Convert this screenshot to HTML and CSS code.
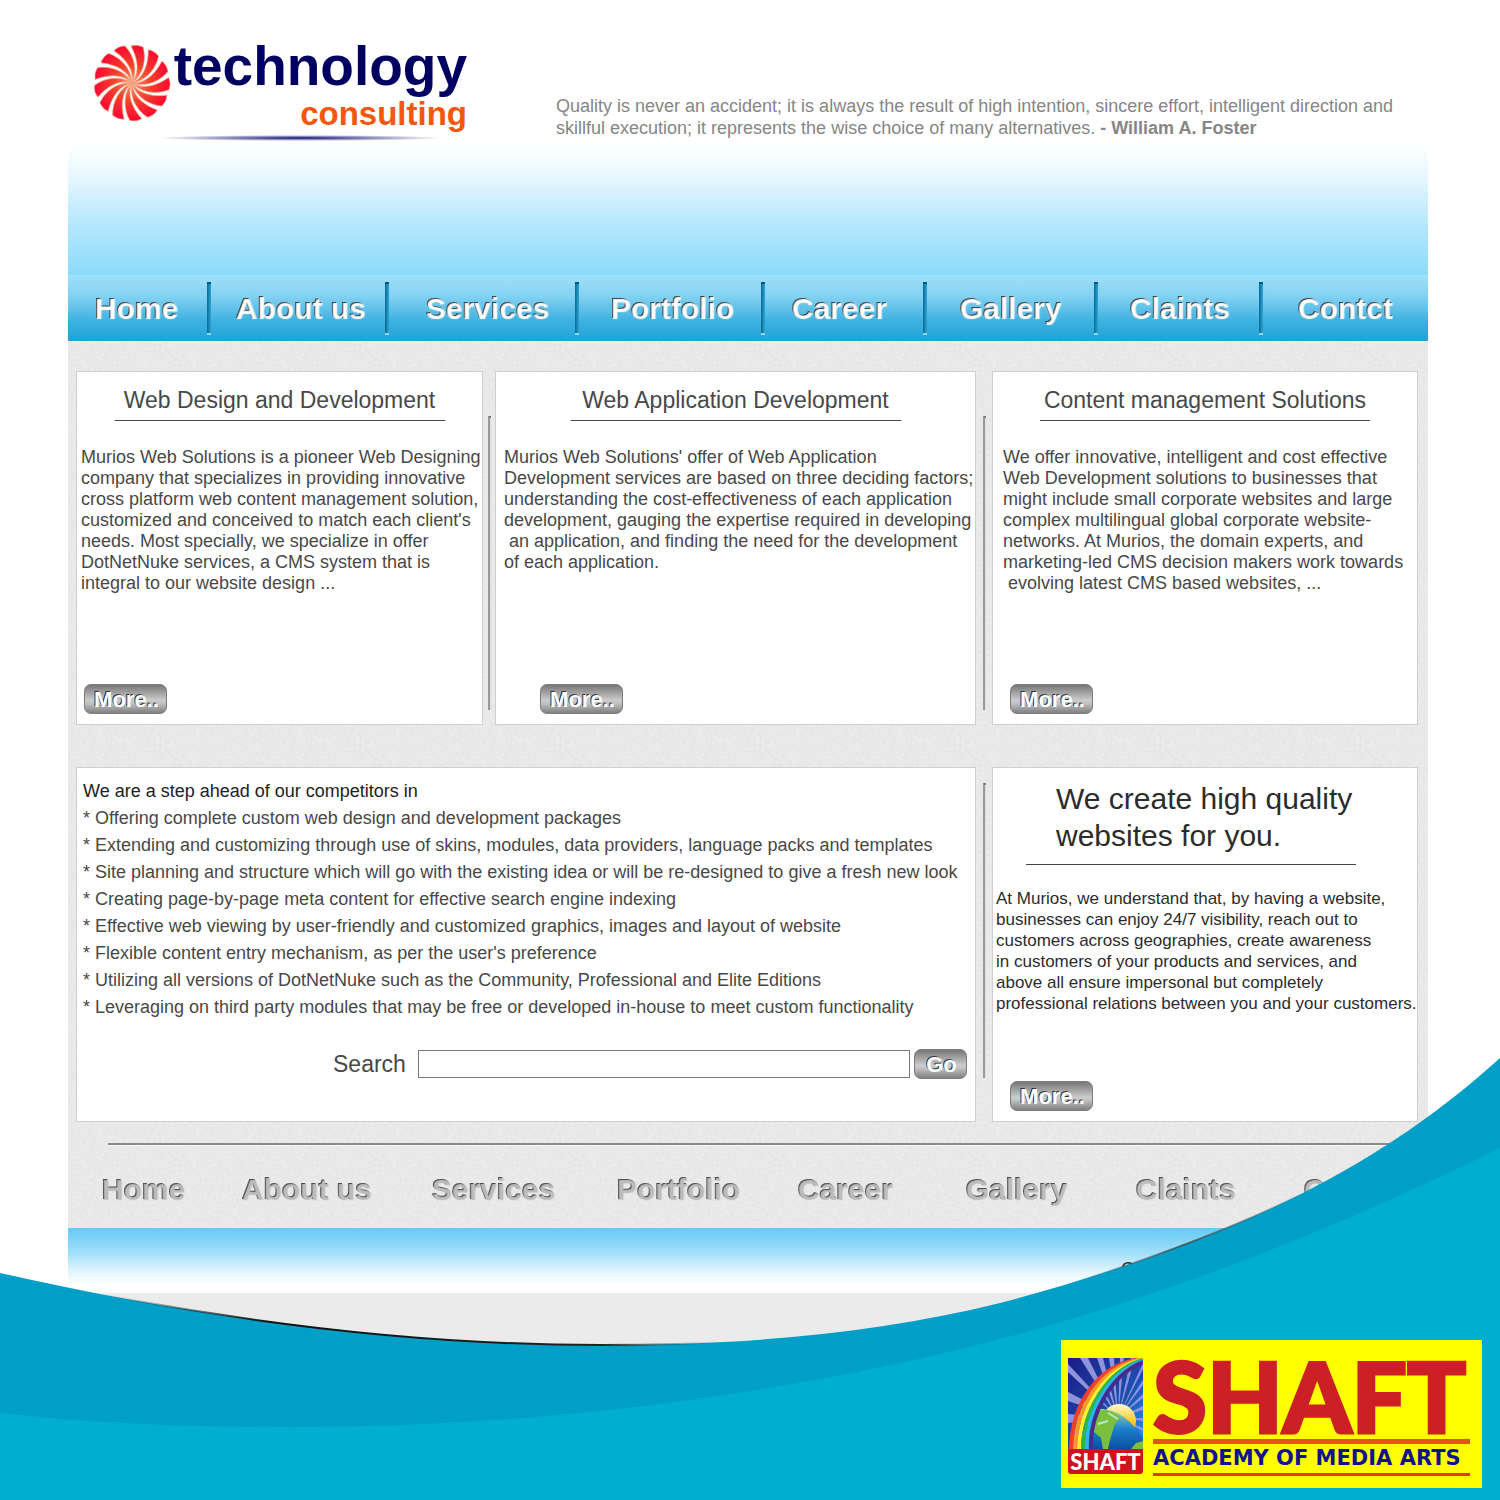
FILE: index.html
```html
<!DOCTYPE html>
<html lang="en">
<head>
<meta charset="utf-8">
<meta name="viewport" content="width=device-width, initial-scale=1">
<title>Technology Consulting</title>
<link rel="stylesheet" href="styles.css">
</head>
<body>
<div class="page">
  <header class="header">
    <div class="logo">
      <svg class="logo-mark" viewBox="-39 -39 78 78" aria-hidden="true">
        <defs>
          <radialGradient id="petal" gradientUnits="userSpaceOnUse" cx="0" cy="0" r="39">
            <stop offset="0" stop-color="#f9a080"/>
            <stop offset=".45" stop-color="#f4432c"/>
            <stop offset="1" stop-color="#fb0433"/>
          </radialGradient>
          <path id="blade" d="M0 0C6-8 8-20-1-37Q5-39 11-36C15-22 10-7 0 0Z" fill="url(#petal)" stroke="#f0a078" stroke-width=".6"/>
        </defs>
        <g>
          <use href="#blade"/><use href="#blade" transform="rotate(27.7)"/><use href="#blade" transform="rotate(55.4)"/><use href="#blade" transform="rotate(83.1)"/><use href="#blade" transform="rotate(110.8)"/><use href="#blade" transform="rotate(138.5)"/><use href="#blade" transform="rotate(166.2)"/><use href="#blade" transform="rotate(193.8)"/><use href="#blade" transform="rotate(221.5)"/><use href="#blade" transform="rotate(249.2)"/><use href="#blade" transform="rotate(276.9)"/><use href="#blade" transform="rotate(304.6)"/><use href="#blade" transform="rotate(332.3)"/>
        </g>
      </svg>
      <div class="logo-text">
        <span class="logo-name">technology</span>
        <span class="logo-sub">consulting</span>
      </div>
      <div class="logo-line"></div>
    </div>
    <p class="quote">Quality is never an accident; it is always the result of high intention, sincere effort, intelligent direction and<br>skillful execution; it represents the wise choice of many alternatives. <b>- William A. Foster</b></p>
  </header>

  <nav class="nav" aria-label="Main">
    <a class="nav-link" href="#">Home</a><span class="nav-sep"></span>
    <a class="nav-link" href="#">About us</a><span class="nav-sep"></span>
    <a class="nav-link" href="#">Services</a><span class="nav-sep"></span>
    <a class="nav-link" href="#">Portfolio</a><span class="nav-sep"></span>
    <a class="nav-link" href="#">Career</a><span class="nav-sep"></span>
    <a class="nav-link" href="#">Gallery</a><span class="nav-sep"></span>
    <a class="nav-link" href="#">Claints</a><span class="nav-sep"></span>
    <a class="nav-link" href="#">Contct</a>
  </nav>

  <main class="content">
    <div class="row row-three">
      <section class="card card-left">
        <h2 class="card-title">Web Design and Development</h2>
        <p class="card-text">Murios Web Solutions is a pioneer Web Designing<br>company that specializes in providing innovative<br>cross platform web content management solution,<br>customized and conceived to match each client's<br>needs. Most specially, we specialize in offer<br>DotNetNuke services, a CMS system that is<br>integral to our website design ...</p>
        <button class="button" type="button"><span class="button-label">More..</span></button>
      </section>
      <div class="divider"></div>
      <section class="card card-middle">
        <h2 class="card-title">Web Application Development</h2>
        <p class="card-text">Murios Web Solutions' offer of Web Application<br>Development services are based on three deciding factors;<br>understanding the cost-effectiveness of each application<br>development, gauging the expertise required in developing<br>&nbsp;an application, and finding the need for the development<br>of each application.</p>
        <button class="button" type="button"><span class="button-label">More..</span></button>
      </section>
      <div class="divider"></div>
      <section class="card card-right">
        <h2 class="card-title">Content management Solutions</h2>
        <p class="card-text">We offer innovative, intelligent and cost effective<br>Web Development solutions to businesses that<br>might include small corporate websites and large<br>complex multilingual global corporate website-<br>networks. At Murios, the domain experts, and<br>marketing-led CMS decision makers work towards<br>&nbsp;evolving latest CMS based websites, ...</p>
        <button class="button" type="button"><span class="button-label">More..</span></button>
      </section>
    </div>

    <div class="row row-two">
      <section class="card card-wide">
        <h2 class="list-title">We are a step ahead of our competitors in</h2>
        <ul class="list">
          <li>* Offering complete custom web design and development packages</li>
          <li>* Extending and customizing through use of skins, modules, data providers, language packs and templates</li>
          <li>* Site planning and structure which will go with the existing idea or will be re-designed to give a fresh new look</li>
          <li>* Creating page-by-page meta content for effective search engine indexing</li>
          <li>* Effective web viewing by user-friendly and customized graphics, images and layout of website</li>
          <li>* Flexible content entry mechanism, as per the user's preference</li>
          <li>* Utilizing all versions of DotNetNuke such as the Community, Professional and Elite Editions</li>
          <li>* Leveraging on third party modules that may be free or developed in-house to meet custom functionality</li>
        </ul>
        <form class="search">
          <label class="search-label" for="search">Search</label>
          <input class="search-input" id="search" type="text">
          <button class="button button-go" type="button"><span class="button-label">Go</span></button>
        </form>
      </section>
      <div class="divider"></div>
      <section class="card card-quality">
        <h2 class="quality-title">We create high quality<br>websites for you.</h2>
        <p class="card-text">At Murios, we understand that, by having a website,<br>businesses can enjoy 24/7 visibility, reach out to<br>customers across geographies, create awareness<br>in customers of your products and services, and<br>above all ensure impersonal but completely<br>professional relations between you and your customers.</p>
        <button class="button" type="button"><span class="button-label">More..</span></button>
      </section>
    </div>

    <hr class="rule">
    <nav class="foot-nav" aria-label="Footer">
      <a class="foot-link" href="#">Home</a>
      <a class="foot-link" href="#">About us</a>
      <a class="foot-link" href="#">Services</a>
      <a class="foot-link" href="#">Portfolio</a>
      <a class="foot-link" href="#">Career</a>
      <a class="foot-link" href="#">Gallery</a>
      <a class="foot-link" href="#">Claints</a>
      <a class="foot-link" href="#">C</a>
    </nav>
  </main>
  <footer class="footer"><span class="footer-text">C</span></footer>
  <div class="base"></div>

  <svg class="wave" viewBox="0 1050 1500 450" preserveAspectRatio="none" aria-hidden="true">
    <defs>
      <linearGradient id="edge" gradientUnits="userSpaceOnUse" x1="0" y1="0" x2="1500" y2="0">
        <stop offset=".07" stop-color="#111" stop-opacity="0"/>
        <stop offset=".18" stop-color="#111"/>
        <stop offset=".4" stop-color="#222"/>
        <stop offset=".48" stop-color="#444" stop-opacity="0"/>
        <stop offset=".72" stop-color="#444" stop-opacity="0"/>
        <stop offset=".79" stop-color="#444" stop-opacity=".8"/>
        <stop offset=".87" stop-color="#444" stop-opacity="0"/>
      </linearGradient>
    </defs>
    <path fill="#009fc7" d="M0 1273C200 1318 400 1345 600 1345C740 1345 870 1335 1000 1303C1105 1275 1210 1240 1303 1193C1380 1154 1445 1108 1500 1058V1500H0Z"/>
    <path fill="none" stroke="url(#edge)" stroke-width="2" d="M0 1273C200 1318 400 1345 600 1345C740 1345 870 1335 1000 1303C1105 1275 1210 1240 1303 1193"/>
    <path fill="#00aecf" d="M0 1413C95 1424 190 1427 290 1427C450 1427 600 1415 750 1391C850 1375 945 1355 1040 1328C1200 1283 1350 1222 1500 1148V1500H0Z"/>
  </svg>

  <aside class="badge">
    <div class="emblem">
      <svg class="emblem-art" viewBox="0 0 75 91" aria-hidden="true">
        <defs>
          <linearGradient id="sky" x1="0" y1="0" x2="1" y2="1"><stop offset="0" stop-color="#1b1c86"/><stop offset=".6" stop-color="#1d4fae"/><stop offset="1" stop-color="#2a9be0"/></linearGradient>
          <linearGradient id="sun" x1="0" y1="0" x2="0" y2="1"><stop offset="0" stop-color="#fffbd0"/><stop offset=".5" stop-color="#ffc928"/><stop offset="1" stop-color="#f9a51b"/></linearGradient>
          <linearGradient id="sea" x1="0" y1="0" x2="0" y2="1"><stop offset="0" stop-color="#9fdc9c"/><stop offset=".5" stop-color="#1b7fcd"/><stop offset="1" stop-color="#0a4fa0"/></linearGradient>
        </defs>
        <rect width="75" height="91" fill="url(#sky)"/>
        <g fill="#8f93dc">
          <path d="M50 60L0 6V14ZM50 60L0 34V43ZM50 60L12 0H20ZM50 60L29 0H35ZM50 60L41 0H46ZM50 60L52 0H56ZM50 60L63 0H67ZM50 60L75 5V11ZM50 60L75 22V27ZM50 60L75 36V40ZM50 60L75 48V52ZM50 60L75 60V63ZM50 60L75 70V73ZM50 60L0 56V65Z"/>
        </g>
        <circle cx="51" cy="63" r="17" fill="url(#sun)"/>
        <path d="M16 91C16 66 22 50 34 51C54 53 66 66 76 82V91Z" fill="url(#sea)"/>
        <path d="M26 56C34 49 44 52 52 59L47 66L45 72L42 82L40 91H35L33 80L26 74Z" fill="#7bbf3f"/>
        <path d="M63 91L68 85L75 83V91Z" fill="#7bbf3f"/>
        <path d="M30 66L40 63M40 55L50 61" stroke="#bfe8c6" stroke-width="2"/>
        <g fill="none" stroke-width="4">
          <path d="M3 91C4 46 30 5 75 1" stroke="#f0402b"/>
          <path d="M7 91C8 49 33 8 75 1" stroke="#f9972a"/>
          <path d="M11 91C12 51 36 10 75 2" stroke="#fff12e"/>
          <path d="M15 91C15 53 39 12 75 2" stroke="#2fb34a"/>
          <path d="M19 91C18 55 41 14 75 3" stroke="#28b5e8"/>
          <path d="M23 91C21 58 42 17 75 4" stroke="#4a2a8c"/>
        </g>
      </svg>
      <span class="emblem-name">SHAFT</span>
    </div>
    <div class="badge-text">
      <span class="badge-name">SHAFT</span>
      <span class="badge-sub">ACADEMY OF MEDIA ARTS</span>
    </div>
  </aside>
</div>
</body>
</html>
```
FILE: styles.css
```css
* { box-sizing: border-box; }

body {
  margin: 0;
  background: #fff;
  color: #484848;
  font-family: "Liberation Sans", Arial, sans-serif;
}

h2, p, ul { margin: 0; padding: 0; font-weight: normal; }
ul { list-style: none; }
a { text-decoration: none; }

.page {
  position: relative;
  display: flex;
  flex-direction: column;
  min-height: 100vh;
  padding: 0 72px 0 68px;
  overflow: hidden;
}

/* Header */
.header {
  display: grid;
  grid-template-columns: 488px 1fr;
  align-items: start;
  height: 275px;
  padding-top: 36px;
  background: linear-gradient(#fff 145px, #e4f6fe 180px, #b4e7fd 225px, #8cdbfa 275px);
}

.logo {
  display: grid;
  grid-template-columns: 78px 296px;
  padding-left: 25px;
}

.logo-mark { width: 78px; height: 78px; margin-top: 8px; }

.logo-text {
  display: flex;
  flex-direction: column;
  align-items: flex-end;
  font-weight: bold;
}

.logo-name { color: #000060; font-size: 55px; line-height: 60px; }
.logo-sub { color: #f4570d; font-size: 33px; line-height: 36px; }

.logo-line {
  grid-column: 1 / -1;
  height: 6px;
  margin: 3px 25px 0 65px;
  background: radial-gradient(closest-side, #10106a, #7d7db4 45%, #fff);
}

.quote {
  padding-top: 59px;
  color: #868686;
  font-size: 18px;
  line-height: 22px;
  white-space: nowrap;
}

/* Main navigation */
.nav {
  display: grid;
  grid-template-columns: 113fr 28fr 150fr 40fr 150fr 35fr 151fr 30fr 132fr 36fr 135fr 35fr 130fr 38fr 131fr;
  height: 66px;
  padding-left: 26px;
  background: linear-gradient(#9fe0fa, #86d3f3 30%, #3db1e0 70%, #20a2d7);
}

.nav-link, .foot-link {
  align-self: center;
  justify-self: start;
  font-size: 30px;
  line-height: 36px;
  font-weight: bold;
  white-space: nowrap;
  color: transparent;
  -webkit-background-clip: text;
  background-clip: text;
}

.nav-link {
  background-color: #333;
  text-shadow: 1px 1px 1px #fff;
}

.nav-sep {
  width: 4px;
  height: 53px;
  margin-top: 7px;
  background: linear-gradient(90deg, #0b6a92, #2aa5d6);
  border-bottom: 2px solid #8fd6f2;
  border-top: 2px solid #0b5577;
}

/* Content */
.content {
  padding: 29px 10px 0 8px;
  border-top: 1px solid #f6f6f6;
  background-color: #ebebeb;
  background-image: url("data:image/svg+xml,%3Csvg xmlns='http://www.w3.org/2000/svg' width='200' height='200'%3E%3Cfilter id='n'%3E%3CfeTurbulence type='fractalNoise' baseFrequency='.35' numOctaves='2' stitchTiles='stitch'/%3E%3CfeColorMatrix values='0 0 0 0 .5 0 0 0 0 .5 0 0 0 0 .5 .35 0 0 0 -.13'/%3E%3C/filter%3E%3Crect width='200' height='200' filter='url(%23n)'/%3E%3C/svg%3E");
}

.row { display: grid; min-height: 354px; }
.row-three { grid-template-columns: 407fr 12px 481fr 16px 426fr; margin-bottom: 42px; }
.row-two { grid-template-columns: 900fr 16px 426fr; }

.card {
  display: flex;
  flex-direction: column;
  align-items: flex-start;
  min-width: 0;
  padding: 14px 4px 10px;
  border: 1px solid #cfcfcf;
  background: #fff;
  white-space: nowrap;
}

.card-left .button { margin-left: 3px; }
.card-middle { padding-left: 8px; padding-right: 8px; }
.card-middle .button { margin-left: 36px; }
.card-right { padding-left: 10px; padding-right: 10px; }
.card-right .button { margin-left: 7px; }

.card-title {
  align-self: center;
  width: 330px;
  padding-bottom: 6px;
  border-bottom: 1px solid #444;
  font-size: 23px;
  line-height: 28px;
  text-align: center;
}

.card-text { margin-top: 26px; font-size: 18px; line-height: 21px; }

.divider {
  justify-self: center;
  width: 3px;
  border-left: 2px solid #999;
  border-top: 2px solid #777;
  background: #dedede;
}

.row-three .divider { margin: 45px 0 15px; }
.row-two .divider { margin: 16px 0 44px; }

.button {
  width: 83px;
  height: 30px;
  margin-top: auto;
  padding: 0;
  border: 1px solid #7c7c7c;
  border-radius: 7px;
  background: linear-gradient(#777, #ccc 55%, #c2c2c2 65%, #808080);
  font-family: inherit;
}

.button-label {
  font-size: 22px;
  line-height: 26px;
  font-weight: bold;
  color: transparent;
  background-color: #333;
  -webkit-background-clip: text;
  background-clip: text;
  text-shadow: 1px 1px 0 #fff;
}

.card-wide { padding: 10px 8px 42px 6px; }

.list, .list-title { font-size: 18px; line-height: 27px; }

.list-title { color: #222; }

.search {
  display: flex;
  align-items: center;
  align-self: stretch;
  gap: 4px;
  margin-top: 28px;
  padding-left: 250px;
}

.search-label { margin-right: 8px; font-size: 23px; line-height: 28px; }

.search-input {
  flex: 1;
  min-width: 0;
  height: 28px;
  border: 1px solid #777;
  background: #fff;
  font: 18px "Liberation Sans", sans-serif;
}

.button-go { width: 53px; margin-top: 0; }

.card-quality { padding: 12px 0 10px 3px; color: #2c2c2c; }
.card-quality .card-text { margin-top: 23px; font-size: 17px; }
.card-quality .button { margin-left: 14px; }

.quality-title {
  width: 330px;
  margin-left: 30px;
  padding: 0 0 10px 30px;
  border-bottom: 1px solid #444;
  font-size: 30px;
  line-height: 37px;
}

.rule {
  height: 3px;
  margin: 21px 20px 0 32px;
  border: 0;
  border-top: 2px solid #8b8788;
  border-bottom: 1px solid #f8f8f8;
}

.foot-nav {
  display: grid;
  grid-template-columns: 140fr 190fr 185fr 181fr 168fr 170fr 168fr 115fr;
  height: 82px;
  padding: 4px 0 0 25px;
}

.foot-link {
  background-color: #444;
  text-shadow: 1px 1px 1px #bdbdbd;
}

/* Footer */
.footer {
  height: 65px;
  padding: 31px 0 0 1053px;
  background: linear-gradient(#63caf5, #a5e0fa 40%, #e9f8fe 70%, #fff 90%);
}

.footer-text { color: #333; font-size: 18px; line-height: 21px; }

.base { flex: 1; background: #ebebeb; }

.wave {
  position: absolute;
  left: 0;
  bottom: 0;
  width: 100%;
  height: 450px;
  pointer-events: none;
}

/* Badge over the wave */
.badge {
  position: absolute;
  right: 18px;
  bottom: 12px;
  display: flex;
  gap: 10px;
  width: 421px;
  height: 148px;
  padding: 18px 12px 12px 7px;
  background: #ff0;
}

.emblem { display: flex; flex-direction: column; width: 75px; }
.emblem-art { width: 75px; height: 91px; }

.emblem-name {
  background: #d01120;
  border-radius: 0 0 3px 3px;
  color: #fff;
  font: 900 22px/25px Lato, sans-serif;
  text-align: center;
}

.badge-text { display: flex; flex-direction: column; width: 317px; }

.badge-name {
  height: 86px;
  border-bottom: 5px solid #e0551c;
  color: #cc1f26;
  font: 900 98px/74px Lato, sans-serif;
  -webkit-text-stroke: 3px #cc1f26;
}

.badge-sub {
  height: 32px;
  border-bottom: 3px solid #dd3a20;
  color: #12128c;
  font: bold 21px/29px "DejaVu Sans", sans-serif;
  white-space: nowrap;
}
```
